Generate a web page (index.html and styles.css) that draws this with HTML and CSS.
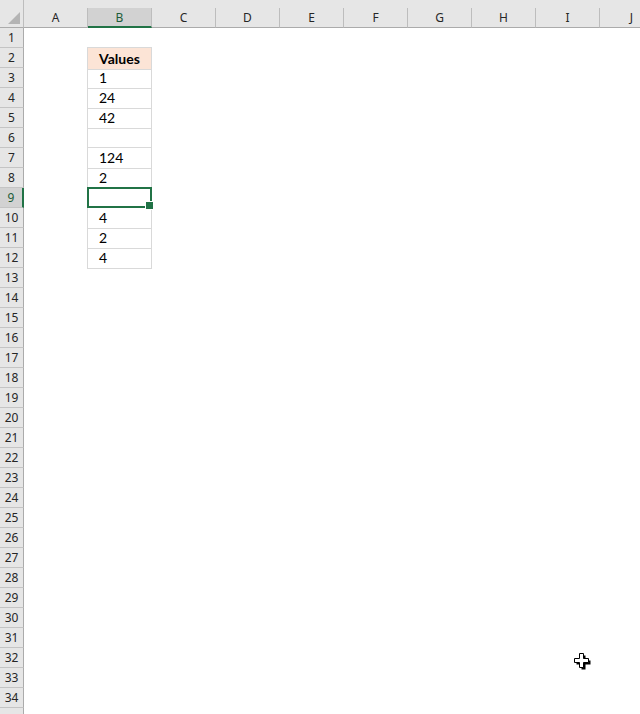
FILE: index.html
```html
<!DOCTYPE html>
<html lang="en">
<head>
    <meta charset="UTF-8">
    <meta name="viewport" content="width=device-width, initial-scale=1.0">
    <title>Values - Sheet1</title>
    <link rel="stylesheet" href="styles.css">
</head>
<body>
    <div class="sheet">
        <div class="col-heads">
            <div class="corner">
                <svg width="23" height="27" viewBox="0 0 23 27"><polygon points="20,12 20,24 8,24" fill="#b4b4b4"/></svg>
            </div>
            <div class="ch">A</div>
            <div class="ch active">B</div>
            <div class="ch">C</div>
            <div class="ch">D</div>
            <div class="ch">E</div>
            <div class="ch">F</div>
            <div class="ch">G</div>
            <div class="ch">H</div>
            <div class="ch">I</div>
            <div class="ch">J</div>
        </div>

        <div class="row"><div class="rh">1</div></div>
        <div class="row"><div class="rh">2</div><div></div><div class="cell head">Values</div></div>
        <div class="row"><div class="rh">3</div><div></div><div class="cell">1</div></div>
        <div class="row"><div class="rh">4</div><div></div><div class="cell">24</div></div>
        <div class="row"><div class="rh">5</div><div></div><div class="cell">42</div></div>
        <div class="row"><div class="rh">6</div><div></div><div class="cell"></div></div>
        <div class="row"><div class="rh">7</div><div></div><div class="cell">124</div></div>
        <div class="row"><div class="rh">8</div><div></div><div class="cell">2</div></div>
        <div class="row"><div class="rh active">9</div><div></div><div class="cell selected"></div></div>
        <div class="row"><div class="rh">10</div><div></div><div class="cell">4</div></div>
        <div class="row"><div class="rh">11</div><div></div><div class="cell">2</div></div>
        <div class="row"><div class="rh">12</div><div></div><div class="cell">4</div></div>
        <div class="row"><div class="rh">13</div></div>
        <div class="row"><div class="rh">14</div></div>
        <div class="row"><div class="rh">15</div></div>
        <div class="row"><div class="rh">16</div></div>
        <div class="row"><div class="rh">17</div></div>
        <div class="row"><div class="rh">18</div></div>
        <div class="row"><div class="rh">19</div></div>
        <div class="row"><div class="rh">20</div></div>
        <div class="row"><div class="rh">21</div></div>
        <div class="row"><div class="rh">22</div></div>
        <div class="row"><div class="rh">23</div></div>
        <div class="row"><div class="rh">24</div></div>
        <div class="row"><div class="rh">25</div></div>
        <div class="row"><div class="rh">26</div></div>
        <div class="row"><div class="rh">27</div></div>
        <div class="row"><div class="rh">28</div></div>
        <div class="row"><div class="rh">29</div></div>
        <div class="row"><div class="rh">30</div></div>
        <div class="row"><div class="rh">31</div></div>
        <div class="row"><div class="rh">32</div></div>
        <div class="row"><div class="rh">33</div></div>
        <div class="row"><div class="rh">34</div></div>
        <!-- row 35 only peeks in at the bottom edge -->
        <div class="row"><div class="rh"></div></div>
    </div>

    <!-- mouse pointer (cell cross) -->
    <svg class="pointer" width="17" height="17" viewBox="0 0 17 17">
        <path d="M6.5 1.5h4v5h5v4h-5v5h-4v-5h-5v-4h5z" fill="#000" transform="translate(1 1)"/>
        <path d="M5.5 0.5h4v5h5v4h-5v5h-4v-5h-5v-4h5z" fill="#fff" stroke="#000" stroke-width="1"/>
    </svg>
</body>
</html>
```

FILE: styles.css
```css
* {
    margin: 0;
    padding: 0;
    box-sizing: border-box;
}

body {
    width: 640px;
    height: 714px;
    overflow: hidden;
    background-color: #fff;
    font-family: "Noto Sans", "Open Sans", sans-serif;
}

.sheet {
    width: 640px;
}

.col-heads,
.row {
    display: grid;
    grid-template-columns: 24px repeat(10, 64px);
}

/* column headers */

.col-heads {
    height: 28px;
    background-color: #e6e6e6;
}

.corner {
    height: 28px;
    border-right: 1px solid #bdbdbd;
    border-bottom: 1px solid #ababab;
}

.corner svg {
    display: block;
}

.ch {
    margin-top: 8px;
    height: 20px;
    border-right: 1px solid #bdbdbd;
    border-bottom: 1px solid #ababab;
    font-size: 12px;
    line-height: 19px;
    text-align: center;
    color: #262626;
}

.ch.active {
    background-color: #d2d2d2;
    border-bottom: 2px solid #217346;
    color: #1d5c38;
}

/* rows */

.row {
    height: 20px;
}

.rh {
    height: 20px;
    background-color: #e6e6e6;
    border-right: 1px solid #ababab;
    border-bottom: 1px solid #c4c4c4;
    font-size: 12px;
    line-height: 19px;
    text-align: center;
    color: #262626;
}

.rh.active {
    background-color: #d2d2d2;
    border-right: 2px solid #217346;
    color: #1d5c38;
}

/* the table in column B */

.cell {
    margin-left: -1px;
    border-left: 1px solid #d9d9d9;
    border-right: 1px solid #d9d9d9;
    border-bottom: 1px solid #d9d9d9;
    padding-left: 11px;
    font-family: Lato, "Liberation Sans", sans-serif;
    font-size: 14px;
    line-height: 20px;
    color: #000;
}

.cell.head {
    margin-top: -1px;
    border-top: 1px solid #d9d9d9;
    background-color: #fce4d6;
    padding-left: 0;
    text-align: center;
    font-weight: bold;
    line-height: 21px;
}

.cell.selected {
    position: relative;
}

.cell.selected::before {
    content: "";
    position: absolute;
    top: -1px;
    left: -1px;
    right: -1px;
    bottom: -1px;
    border: 2px solid #217346;
}

.cell.selected::after {
    content: "";
    position: absolute;
    right: -3px;
    bottom: -3px;
    width: 7px;
    height: 7px;
    background-color: #217346;
    border: 1px solid #fff;
}

.pointer {
    position: absolute;
    left: 574px;
    top: 653px;
}
```
